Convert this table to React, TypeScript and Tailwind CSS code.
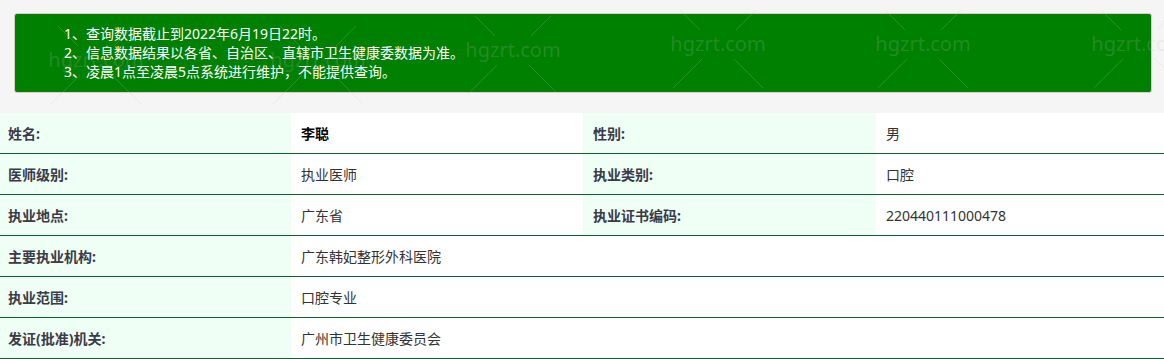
import React from "react";

const notices = [
  "1、查询数据截止到2022年6月19日22时。",
  "2、信息数据结果以各省、自治区、直辖市卫生健康委数据为准。",
  "3、凌晨1点至凌晨5点系统进行维护，不能提供查询。",
];

type Pair = { label: string; value: string; strong?: boolean };

const pairRows: [Pair, Pair][] = [
  [
    { label: "姓名:", value: "李聪", strong: true },
    { label: "性别:", value: "男" },
  ],
  [
    { label: "医师级别:", value: "执业医师" },
    { label: "执业类别:", value: "口腔" },
  ],
  [
    { label: "执业地点:", value: "广东省" },
    { label: "执业证书编码:", value: "220440111000478" },
  ],
];

const wideRows: Pair[] = [
  { label: "主要执业机构:", value: "广东韩妃整形外科医院" },
  { label: "执业范围:", value: "口腔专业" },
  { label: "发证(批准)机关:", value: "广州市卫生健康委员会" },
];

// watermark centres (text centre)
const marks = [
  { x: 96, y: 60 },
  { x: 318, y: 60 },
  { x: 513, y: 50 },
  { x: 718, y: 44 },
  { x: 923, y: 44 },
  { x: 1139, y: 44 },
];

function Watermark() {
  return (
    <svg
      className="pointer-events-none absolute left-0 top-0"
      width={1164}
      height={113}
      viewBox="0 0 1164 113"
    >
      {marks.map((m, i) => (
        <g key={i} stroke="rgba(190,190,190,0.22)" strokeWidth={1}>
          <line x1={m.x - 38} y1={m.y - 34} x2={m.x - 18} y2={m.y - 14} />
          <line x1={m.x + 38} y1={m.y - 34} x2={m.x + 18} y2={m.y - 14} />
          <line x1={m.x - 45} y1={m.y + 44} x2={m.x - 16} y2={m.y + 15} />
          <line x1={m.x + 45} y1={m.y + 44} x2={m.x + 16} y2={m.y + 15} />
          <text
            x={m.x}
            y={m.y + 7}
            textAnchor="middle"
            fontSize={20}
            fontFamily="'Noto Sans', sans-serif"
            fill="rgba(190,190,190,0.2)"
            stroke="none"
          >
            hgzrt.com
          </text>
        </g>
      ))}
    </svg>
  );
}

function Label({ children }: { children: React.ReactNode }) {
  return (
    <div className="flex items-center bg-[#effff6] pl-[8px] font-bold text-[#3a3a48]">
      {children}
    </div>
  );
}

function Value({ children, strong }: { children: React.ReactNode; strong?: boolean }) {
  return (
    <div
      className={
        strong
          ? "flex items-center bg-white pl-[10px] font-bold text-black"
          : "flex items-center bg-white pl-[10px] text-[#333]"
      }
    >
      {children}
    </div>
  );
}

export default function App() {
  return (
    <div
      className="w-[1164px] bg-[#f5f5f5] text-[14px]"
      style={{ fontFamily: "'Noto Sans', 'Noto Sans CJK SC', sans-serif" }}
    >
      <div className="relative h-[113px] pl-[14px] pt-[13px]">
        <div className="h-[80px] w-[1138px] rounded-[3px] border border-[#e6c6c6] bg-[#008000] pl-[49px] pt-[10px] leading-[19px] text-white">
          {notices.map((n) => (
            <div key={n}>{n}</div>
          ))}
        </div>
        <Watermark />
      </div>

      <div className="grid grid-cols-[291px_292px_293px_288px]">
        {pairRows.map(([a, b], i) => (
          <div
            key={i}
            className="col-span-4 grid h-[41px] grid-cols-subgrid border-b border-[#0b6332]"
          >
            <Label>{a.label}</Label>
            <Value strong={a.strong}>{a.value}</Value>
            <div className="flex items-center bg-[#effff6] pl-[10px] font-bold text-[#3a3a48]">
              {b.label}
            </div>
            <Value>{b.value}</Value>
          </div>
        ))}
        {wideRows.map((r) => (
          <div
            key={r.label}
            className="col-span-4 grid h-[41px] grid-cols-subgrid border-b border-[#0b6332]"
          >
            <Label>{r.label}</Label>
            <div className="col-span-3 flex items-center bg-white pl-[10px] text-[#333]">
              {r.value}
            </div>
          </div>
        ))}
      </div>
    </div>
  );
}
